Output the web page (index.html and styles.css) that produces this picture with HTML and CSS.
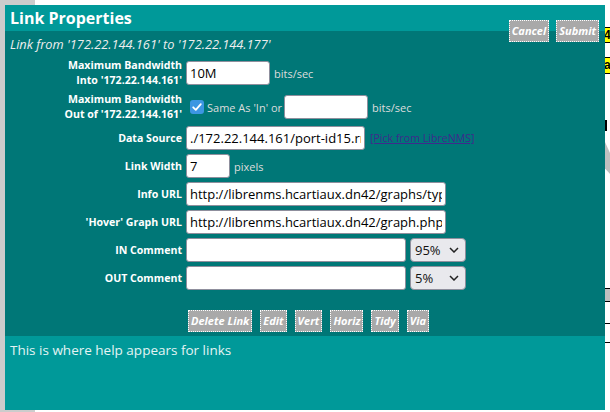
FILE: index.html
```html
<!DOCTYPE html>
<html>
<head>
<meta charset="utf-8">
<link rel="stylesheet" href="styles.css">
</head>
<body>
<div class="sidebar"></div>
<div class="map">
  <span class="tag tag-a">4</span>
  <span class="tag tag-b">a</span>
  <span class="mline m1"></span>
  <span class="gshape g1"></span>
  <span class="gbox g2"></span>
  <span class="hline h1"></span>
  <span class="hline h2"></span>
</div>

<div class="dialog">
  <div class="titlebar">Link Properties</div>
  <div class="actions">
    <button class="btn">Cancel</button>
    <button class="btn">Submit</button>
  </div>
  <div class="body">
    <div class="subtitle">Link from '172.22.144.161' to '172.22.144.177'</div>
    <div class="form">
      <label class="lbl">Maximum Bandwidth<br>Into '172.22.144.161'</label>
      <div class="field"><input class="txt w-bw" value="10M"><span class="unit">bits/sec</span></div>

      <label class="lbl">Maximum Bandwidth<br>Out of '172.22.144.161'</label>
      <div class="field">
        <span class="check"><svg width="14" height="14" viewBox="0 0 14 14"><rect x="0" y="0" width="14" height="14" rx="3" fill="#3c96e2"/><path d="M3.2 7.3 L5.8 9.8 L10.8 4.2" fill="none" stroke="#fff" stroke-width="1.8" stroke-linecap="round" stroke-linejoin="round"/></svg></span>
        <span class="unit same">Same As 'In' or</span>
        <input class="txt w-bw" value="">
        <span class="unit">bits/sec</span>
      </div>

      <label class="lbl">Data Source</label>
      <div class="field"><input class="txt w-ds" value="./172.22.144.161/port-id15.rrd"><a class="pick" href="#">[Pick from LibreNMS]</a></div>

      <label class="lbl">Link Width</label>
      <div class="field"><input class="txt w-lw" value="7"><span class="unit">pixels</span></div>

      <label class="lbl">Info URL</label>
      <div class="field"><input class="txt w-url" value="http://librenms.hcartiaux.dn42/graphs/type=port_bits"></div>

      <label class="lbl">'Hover' Graph URL</label>
      <div class="field"><input class="txt w-url" value="http://librenms.hcartiaux.dn42/graph.php?type=port_bits"></div>

      <label class="lbl">IN Comment</label>
      <div class="field"><input class="txt w-cm" value="">
        <span class="sel"><select><option>95%</option></select><svg class="chev" width="10" height="6" viewBox="0 0 10 6"><path d="M1 1 L5 5 L9 1" fill="none" stroke="#222" stroke-width="1.5"/></svg></span>
      </div>

      <label class="lbl">OUT Comment</label>
      <div class="field"><input class="txt w-cm" value="">
        <span class="sel"><select><option>5%</option></select><svg class="chev" width="10" height="6" viewBox="0 0 10 6"><path d="M1 1 L5 5 L9 1" fill="none" stroke="#222" stroke-width="1.5"/></svg></span>
      </div>

      <div class="tools">
        <button class="btn">Delete Link</button>
        <button class="btn">Edit</button>
        <button class="btn">Vert</button>
        <button class="btn">Horiz</button>
        <button class="btn">Tidy</button>
        <button class="btn">Via</button>
      </div>
    </div>
  </div>
  <div class="help">This is where help appears for links</div>
</div>
</body>
</html>
```

FILE: styles.css
```css
html, body {
  margin: 0;
  padding: 0;
  width: 610px;
  height: 412px;
  overflow: hidden;
  background: #ffffff;
  font-family: "Open Sans", "Noto Sans", sans-serif;
}

.sidebar {
  position: absolute;
  left: 0;
  top: 0;
  width: 35px;
  height: 412px;
  background: #cccccc;
}

.map .tag {
  position: absolute;
  left: 604px;
  width: 12px;
  background: #ffff00;
  border-top: 1px solid #000;
  border-bottom: 1px solid #000;
  font: bold 12px "Liberation Sans", sans-serif;
  line-height: 14px;
  color: #000;
}
.map .tag-a { top: 27px; height: 14px; }
.map .tag-b { top: 57px; height: 15px; }
.map .mline {
  position: absolute;
  left: 605px;
  top: 120px;
  width: 2px;
  height: 11px;
  background: #000;
}
.map .gshape {
  position: absolute;
  left: 605px;
  top: 142px;
  width: 6px;
  height: 33px;
  background: #c0c0c0;
  clip-path: polygon(0 0, 100% 40%, 100% 100%, 0 80%);
}
.map .gbox {
  position: absolute;
  left: 604px;
  top: 288px;
  width: 8px;
  height: 12px;
  background: #c0c0c0;
  border-top: 1px solid #000;
  border-bottom: 1px solid #000;
}
.map .hline {
  position: absolute;
  left: 604px;
  width: 8px;
  height: 1px;
  background: #000;
}
.map .h1 { top: 323px; }
.map .h2 { top: 342px; }

.dialog {
  position: absolute;
  left: 5px;
  top: 5px;
  width: 600px;
  height: 405px;
  display: flex;
  flex-direction: column;
  background: #007777;
}

.titlebar {
  height: 26px;
  line-height: 26px;
  padding-left: 5px;
  background: #009999;
  color: #ffffff;
  font-weight: bold;
  font-size: 16px;
}

.actions {
  position: absolute;
  top: 15px;
  right: 6px;
  display: flex;
  gap: 7px;
}

.btn {
  height: 22px;
  padding: 0 2px;
  margin: 0;
  background: #a9a9a9;
  border: 1px dotted #ffffff;
  color: #ffffff;
  font-family: "Open Sans", "Noto Sans", sans-serif;
  font-style: italic;
  font-weight: bold;
  font-size: 11px;
  line-height: 18px;
}

.body {
  flex: 1;
  background: #007777;
}

.subtitle {
  height: 27px;
  line-height: 27px;
  padding-left: 5px;
  font-style: italic;
  font-size: 12.8px;
  color: #eeeeee;
}

.form {
  display: grid;
  grid-template-columns: 177px 1fr;
  column-gap: 4px;
  row-gap: 4px;
}

.lbl {
  align-self: center;
  text-align: right;
  color: #ffffff;
  font-weight: bold;
  font-size: 10.6px;
  line-height: 15px;
}

.field {
  display: flex;
  align-items: center;
  gap: 4px;
}

.txt {
  box-sizing: border-box;
  height: 24px;
  margin: 0;
  padding: 0 3px;
  border: 1px solid #8f8f9d;
  border-radius: 3px;
  background: #ffffff;
  color: #000000;
  font-family: "Open Sans", "Noto Sans", sans-serif;
  font-size: 13px;
}
.w-bw { width: 84px; }
.w-ds { width: 179px; }
.w-lw { width: 44px; }
.w-url { width: 260px; }
.w-cm { width: 220px; }

.unit {
  color: #dddddd;
  font-size: 11px;
}
.same { margin-right: -2px; }

.check {
  display: inline-flex;
  margin-left: 4px;
  margin-right: -1px;
}

.pick {
  margin-left: 1px;
  color: #3f2a8c;
  font-size: 10.6px;
  text-decoration: underline;
}

.sel {
  position: relative;
  display: inline-flex;
}
.sel select {
  appearance: none;
  -webkit-appearance: none;
  box-sizing: border-box;
  width: 56px;
  height: 24px;
  margin: 0;
  padding: 0 0 0 4px;
  border: 1px solid #8f8f9d;
  border-radius: 4px;
  background: #e9e9ed;
  color: #111111;
  font-family: "Open Sans", "Noto Sans", sans-serif;
  font-size: 13px;
}
.sel .chev {
  position: absolute;
  right: 7px;
  top: 9px;
  pointer-events: none;
}

.tools {
  grid-column: 2;
  display: flex;
  gap: 8px;
  margin-top: 16px;
  padding-left: 2px;
  padding-bottom: 4px;
}

.help {
  height: 74px;
  box-sizing: border-box;
  padding: 5px 5px;
  background: #009999;
  color: #e4f4f4;
  font-size: 13.5px;
  line-height: 18px;
}
```
